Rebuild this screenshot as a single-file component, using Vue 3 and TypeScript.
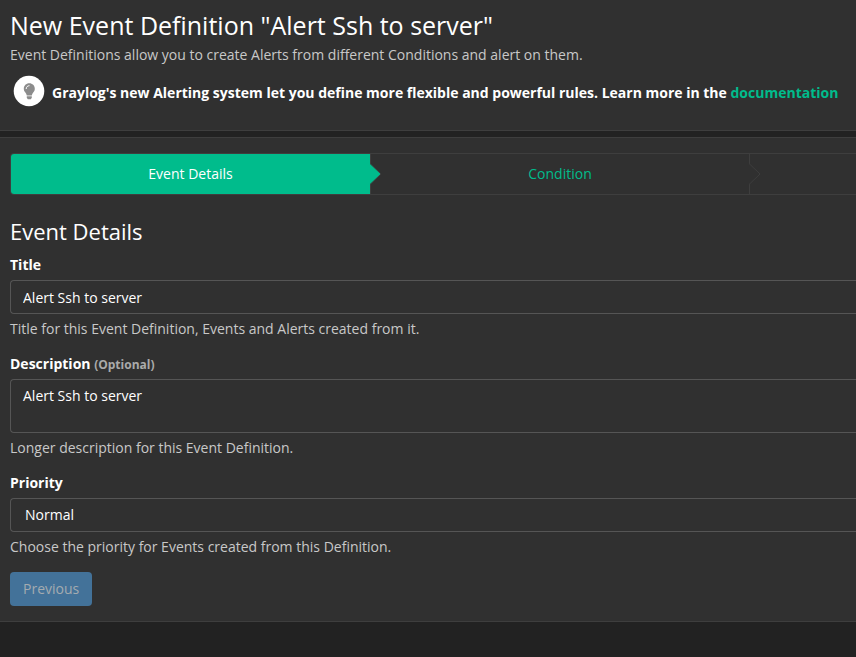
<script setup lang="ts">
import { computed, ref } from 'vue'

interface Step {
  key: string
  label: string
}

const steps: Step[] = [
  { key: 'event-details', label: 'Event Details' },
  { key: 'condition', label: 'Condition' },
]

const activeStep = ref('event-details')
const title = ref('Alert Ssh to server')
const description = ref('Alert Ssh to server')
const priority = ref('Normal')

const isFirstStep = computed(() => activeStep.value === steps[0].key)

function goBack(): void {
  const index = steps.findIndex((step) => step.key === activeStep.value)
  if (index > 0) activeStep.value = steps[index - 1].key
}
</script>

<template>
  <div class="page">
    <header class="panel page-header">
      <h1>New Event Definition "{{ title }}"</h1>
      <p class="lead">Event Definitions allow you to create Alerts from different Conditions and alert on them.</p>
      <div class="support">
        <svg class="bulb" viewBox="0 0 32 32" aria-hidden="true">
          <circle cx="16" cy="16" r="15.3" fill="#fff" />
          <path
            fill="#8c8c8c"
            d="M16.3 8.3c-3.2 0-5.5 2.5-5.5 5.4 0 1.4.5 2.6 1.4 3.6.8.9 1.3 2 1.6 3.1h5c.3-1.1.8-2.2 1.6-3.1.9-1 1.4-2.2 1.4-3.6 0-3-2.4-5.4-5.5-5.4z"
          />
          <path fill="#8c8c8c" d="M13.8 21.3h5v1.5l-1 1.5h-3l-1-1.5z" />
          <path d="M13.2 13.6c0-1.6 1.3-2.9 2.9-2.9" fill="none" stroke="#fff" stroke-width="1" stroke-linecap="round" />
        </svg>
        <strong>
          Graylog's new Alerting system let you define more flexible and powerful rules. Learn more in the
          <a href="#documentation">documentation</a>
        </strong>
      </div>
    </header>

    <main class="panel content">
      <nav class="steps" aria-label="Steps">
        <button
          v-for="step in steps"
          :key="step.key"
          type="button"
          class="step"
          :class="{ active: step.key === activeStep }"
          @click="activeStep = step.key"
        >
          {{ step.label }}
          <svg class="arrow" viewBox="0 0 12 22" aria-hidden="true">
            <path d="M0 0.5L11 11L0 21.5" />
          </svg>
        </button>
      </nav>

      <form @submit.prevent>
        <h2>Event Details</h2>

        <div class="field">
          <label for="title">Title</label>
          <input id="title" v-model="title" class="control" type="text" />
          <p class="help">Title for this Event Definition, Events and Alerts created from it.</p>
        </div>

        <div class="field">
          <label for="description">Description <small>(Optional)</small></label>
          <textarea id="description" v-model="description" class="control" rows="2"></textarea>
          <p class="help">Longer description for this Event Definition.</p>
        </div>

        <div class="field">
          <label for="priority">Priority</label>
          <select id="priority" v-model="priority" class="control">
            <option>Normal</option>
          </select>
          <p class="help">Choose the priority for Events created from this Definition.</p>
        </div>

        <button type="button" class="previous" :disabled="isFirstStep" @click="goBack">Previous</button>
      </form>
    </main>
  </div>
</template>

<style>
body {
  margin: 0;
  background: #222;
}
</style>

<style scoped>
.page {
  display: flex;
  flex-direction: column;
  gap: 6px;
  overflow: hidden;
  color: #fff;
  font: 14px/20px 'Open Sans', 'Noto Sans', sans-serif;
}

.page * {
  box-sizing: border-box;
}

.panel {
  padding-left: 10px;
  background: #303030;
  border-bottom: 1px solid #3e3e3e;
}

.page-header {
  padding-top: 10px;
  padding-bottom: 23px;
}

h1,
h2,
p {
  margin: 0;
  font-weight: 400;
}

h1 {
  font-size: 25px;
  line-height: 30px;
}

.lead {
  margin-top: 5px;
  color: #c8c8c8;
}

.support {
  display: flex;
  align-items: center;
  gap: 7px;
  margin-top: 10px;
  padding-left: 3px;
  white-space: nowrap;
}

.bulb {
  flex: none;
  width: 32px;
  height: 32px;
}

.support strong {
  padding-top: 4px;
}

a {
  color: #00bc8c;
  text-decoration: none;
}

.content {
  padding-top: 15px;
  padding-bottom: 15px;
  border-top: 1px solid #3e3e3e;
}

.steps {
  display: grid;
  grid-template-columns: 360fr 379fr 106fr;
  height: 42px;
  border: 1px solid #3e3e3e;
  border-right: 0;
  border-radius: 4px 0 0 4px;
}

.step {
  position: relative;
  padding: 0;
  color: #00bc8c;
  font: inherit;
  background: none;
  border: 0;
  border-right: 1px solid #3e3e3e;
  cursor: pointer;
}

.step.active {
  color: #fff;
  background: #00bc8c;
  border-radius: 3px 0 0 3px;
}

.arrow {
  position: absolute;
  top: 9px;
  left: 100%;
  z-index: 1;
  width: 12px;
  height: 22px;
  fill: #303030;
  stroke: #3e3e3e;
}

.step.active .arrow {
  fill: #00bc8c;
}

h2 {
  margin-top: 21px;
  font-size: 22px;
  line-height: 30px;
}

.field {
  display: flex;
  flex-direction: column;
  margin-bottom: 15px;
}

h2 + .field {
  margin-top: 9px;
}

label {
  margin-bottom: 5px;
  font-weight: 700;
}

label small {
  color: #aaa;
  font-size: 12px;
  line-height: 1;
}

.control {
  display: block;
  width: 100%;
  height: 34px;
  padding: 6px 12px;
  color: #fff;
  font: inherit;
  background: #303030;
  border: 1px solid #555;
  border-right: 0;
  border-radius: 4px 0 0 4px;
  outline: 0;
  appearance: none;
  resize: none;
}

textarea.control {
  height: 54px;
}

select.control {
  padding-left: 14px;
}

.help {
  margin-top: 5px;
  color: #c8c8c8;
}

.previous {
  height: 34px;
  padding: 0 13px;
  color: #a4abb0;
  font: inherit;
  background: #437299;
  border: 0;
  border-radius: 4px;
}
</style>
